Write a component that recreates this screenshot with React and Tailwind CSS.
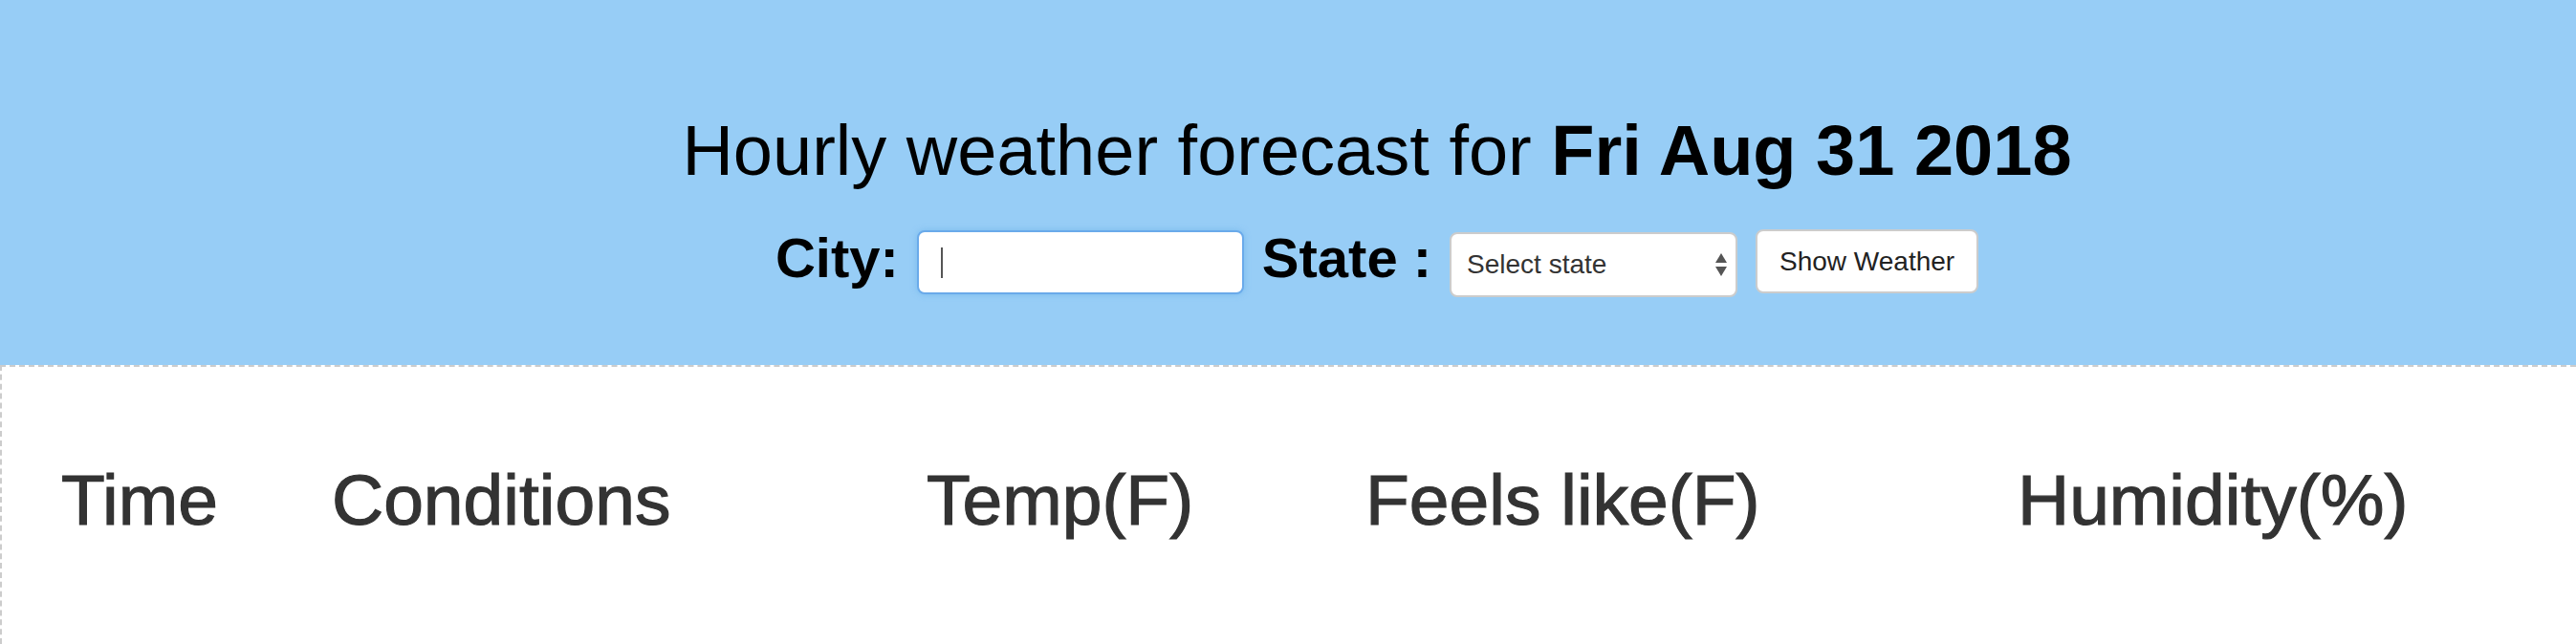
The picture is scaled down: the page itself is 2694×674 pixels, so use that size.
import React from 'react';

const columns = ['Time', 'Conditions', 'Temp(F)', 'Feels like(F)', 'Humidity(%)'];

const App = () => {
  return (
    <div className="min-h-[674px] flex flex-col bg-white font-['Liberation_Sans',Arial,sans-serif]">
      {/* Header */}
      <div className="h-[382px] bg-[#97cdf6] pl-[186px] flex flex-col items-center pt-[121px]">
        <h1 className="text-[74px] leading-none text-black">
          Hourly weather forecast for <b>Fri Aug 31 2018</b>
        </h1>
        <div className="flex items-start gap-[19px] mt-[45px]">
          <label className="mt-[1px] text-[58px] leading-none font-bold text-black">City:</label>
          <div className="mt-[1px] w-[342px] h-[67px] bg-white rounded-[8px] border-2 border-[#6aaaea] shadow-[0_0_6px_rgba(102,175,233,0.6)] flex items-center pl-[23px]">
            <span className="w-[2px] h-[32px] bg-[#555]" />
          </div>
          <label className="mt-[1px] text-[58px] leading-none font-bold text-black">State :</label>
          <div className="mt-[3px] w-[301px] h-[68px] bg-white rounded-[8px] border-2 border-[#cccccc] flex items-center justify-between pl-[16px] pr-[8px]">
            <span className="text-[28px] text-[#333]">Select state</span>
            <svg width="14" height="26" viewBox="0 0 14 26">
              <polygon points="7,1 13,11 1,11" fill="#555" />
              <polygon points="1,15 13,15 7,25" fill="#555" />
            </svg>
          </div>
          <button className="w-[233px] h-[67px] bg-white rounded-[8px] border-2 border-[#cccccc] text-[28px] text-[#222]">
            Show Weather
          </button>
        </div>
      </div>
      {/* Forecast table */}
      <div className="flex-1 border-t-2 border-l-2 border-dashed border-[#cccccc] pt-[102px]">
        <div className="grid grid-cols-[283px_622px_459px_682px_1fr] pl-[62px]">
          {columns.map((c) => (
            <div key={c} className="text-[75px] leading-none text-[#333] [-webkit-text-stroke:1.2px_#333]">{c}</div>
          ))}
        </div>
      </div>
    </div>
  );
};

export default App;
